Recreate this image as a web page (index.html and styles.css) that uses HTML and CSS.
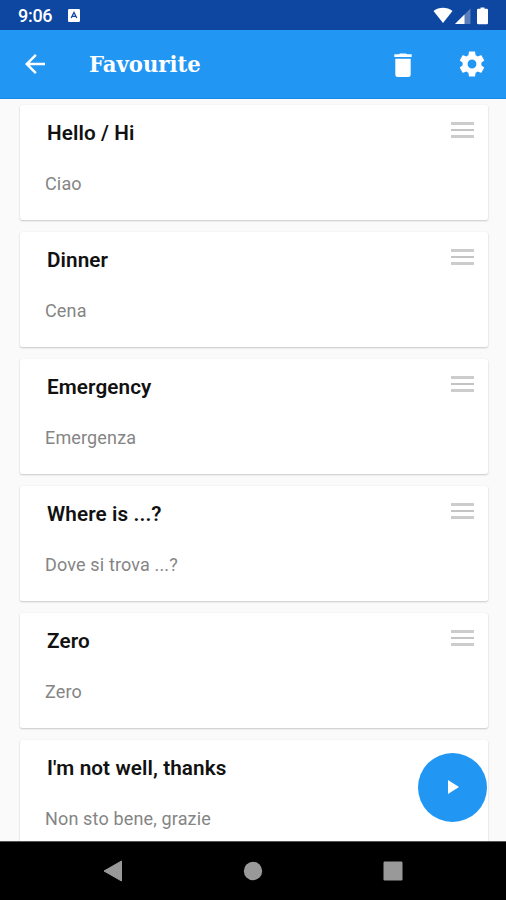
FILE: index.html
```html
<!DOCTYPE html>
<html lang="en">
<head>
<meta charset="utf-8">
<title>Favourite</title>
<link rel="stylesheet" href="styles.css">
</head>
<body>
<div class="screen">
  <div class="status">
    <span class="clock">9:06</span>
    <svg class="app-badge" viewBox="0 0 12 13"><rect width="12" height="13" rx="1.2" fill="#fff"/><path d="M3.2 9 6 3.5 8.8 9M4.4 7.4h3.2" fill="none" stroke="#0d47a1" stroke-width="1.3"/></svg>
    <svg class="signals" viewBox="0 0 58 18"><path d="M0.5 4C6-.2 14-.2 19.500 4L10 16z" fill="#fff"/><path d="M37.500 1.500V17H22z" fill="#5b7fbb"/><path d="M31.500 7.500V17H22z" fill="#fff"/><path d="M47.500 1.800V.5h4v1.300h2.300q1.200 0 1.200 1.200v13q0 1.200-1.200 1.200h-8.600q-1.200 0-1.200-1.200V3q0-1.200 1.200-1.200z" fill="#fff"/></svg>
  </div>
  <header class="appbar">
    <svg class="back" viewBox="4 4 16 16"><path fill="#fff" d="M20 11H7.830l5.590-5.590L12 4l-8 8 8 8 1.410-1.410L7.830 13H20v-2z"/></svg>
    <h1 class="heading"><span class="heading-text">Favourite</span></h1>
    <svg class="trash" viewBox="0 0 18 25"><path fill="#fff" d="M.3 1.300H5L6 .4h6l1 .9h4.700V4H.3zM1.300 5.800h15.400v15.700q0 2.500-2.500 2.500H3.800q-2.500 0-2.500-2.500z"/></svg>
    <svg class="gear" viewBox="2 2 20 20"><path fill="#fff" d="M19.140 12.940c.04-.3.060-.61.060-.94 0-.32-.02-.64-.07-.94l2.030-1.580c.18-.14.230-.41.120-.61l-1.920-3.320c-.12-.22-.37-.29-.59-.22l-2.390.96c-.5-.38-1.030-.7-1.620-.94l-.36-2.540c-.04-.24-.24-.41-.48-.41h-3.840c-.24 0-.43.170-.47.410l-.36 2.540c-.59.240-1.130.570-1.620.940l-2.390-.96c-.22-.08-.47 0-.59.220L2.740 8.870c-.12.210-.08.470.120.610l2.030 1.580c-.05.300-.09.630-.09.940s.02.640.07.940l-2.030 1.580c-.18.140-.23.410-.12.610l1.920 3.320c.12.220.37.290.59.220l2.390-.96c.5.380 1.030.7 1.620.94l.36 2.540c.05.240.24.410.48.410h3.840c.24 0 .44-.17.470-.41l.36-2.540c.59-.24 1.130-.56 1.620-.94l2.390.96c.22.080.47 0 .59-.22l1.920-3.320c.12-.22.070-.47-.12-.61l-2.010-1.580zM12 15.400A3.400 3.400 0 1 1 12 8.600a3.400 3.400 0 0 1 0 6.800z"/></svg>
  </header>
  <main class="list">
    <article class="card"><div class="row"><h2>Hello / Hi</h2><i class="handle"></i></div><p>Ciao</p></article>
    <article class="card"><div class="row"><h2>Dinner</h2><i class="handle"></i></div><p>Cena</p></article>
    <article class="card"><div class="row"><h2>Emergency</h2><i class="handle"></i></div><p>Emergenza</p></article>
    <article class="card"><div class="row"><h2>Where is ...?</h2><i class="handle"></i></div><p>Dove si trova ...?</p></article>
    <article class="card"><div class="row"><h2>Zero</h2><i class="handle"></i></div><p>Zero</p></article>
    <article class="card"><div class="row"><h2>I'm not well, thanks</h2></div><p>Non sto bene, grazie</p></article>
    <div class="fab"><svg viewBox="0 0 11 14"><path d="M0 0v14l11-7z" fill="#fff"/></svg></div>
  </main>
  <nav class="navbar">
    <svg viewBox="0 0 20 22"><path d="M18.500 1v20L1 11z" fill="#999" stroke="#999" stroke-linejoin="round"/></svg>
    <svg viewBox="0 0 20 22"><circle cx="10" cy="11" r="9.200" fill="#999"/></svg>
    <svg viewBox="0 0 20 22"><rect x=".5" y="1.500" width="19" height="19" rx="1.200" fill="#999"/></svg>
  </nav>
</div>
</body>
</html>
```
FILE: styles.css
```css
* { box-sizing: border-box; }
body { margin: 0; font-family: Roboto, "Liberation Sans", sans-serif; background: #fafafa; }
svg { display: block; flex: none; }
.screen { width: 506px; height: 900px; display: flex; flex-direction: column; overflow: hidden; }
.status { height: 30px; flex: none; background: #0d47a1; display: flex; align-items: center; padding: 0 15px 0 18px; }
.clock { width: 50px; color: #fff; font-size: 18px; font-weight: 500; line-height: 30px; padding-top: 2px; letter-spacing: -.3px; }
.app-badge { width: 12px; height: 13px; margin-top: 1px; }
.signals { width: 58px; height: 18px; margin: 1px 0 0 auto; }
.appbar { height: 69px; flex: none; background: #2196f3; border-bottom: 1px solid #168ae6; display: flex; align-items: center; padding: 0 21px 0 25px; }
.back { width: 20px; height: 20px; }
.heading { margin: 0 auto 0 44px; color: #fff; font: bold 23px/30px "DejaVu Serif", "Liberation Serif", serif; width: 112px; white-space: nowrap; }
.heading-text { display: inline-block; transform: scaleX(.92); transform-origin: left; }
.trash { width: 18px; height: 25px; margin: 2px 47px 0 0; }
.gear { width: 26px; height: 26px; }
.list { position: relative; height: 742px; flex: none; overflow: hidden; padding: 6px 18px 0 20px; display: flex; flex-direction: column; gap: 12px; }
.card { height: 115px; flex: none; background: #fff; border-radius: 2px; box-shadow: 0 1px 2px rgba(0, 0, 0, .2), 0 0 1px rgba(0, 0, 0, .08); padding: 14px 14px 0 25px; }
.row { display: flex; justify-content: space-between; padding-left: 2px; height: 26px; }
.card h2 { margin: 0; font-size: 20.7px; font-weight: 600; line-height: 28px; color: #111; letter-spacing: .1px; }
.card p { margin: 26px 0 0; font-size: 18px; line-height: 26px; color: #858585; letter-spacing: .15px; }
.handle { width: 23px; height: 16px; margin-top: 3px; background: linear-gradient(#ccc 0 3px, transparent 3px 7px, #c4c4c4 7px 9px, transparent 9px 13px, #ccc 13px); }
.fab { position: absolute; right: 19px; top: 654px; width: 69px; height: 69px; border-radius: 50%; background: #2196f3; display: flex; align-items: center; justify-content: center; }
.fab svg { width: 11px; height: 14px; margin: -1px 0 0 2px; }
.navbar { flex: 1; background: #000; border-top: 1px solid #555; display: flex; justify-content: space-between; align-items: center; padding: 0 103px 1px; }
.navbar svg { width: 20px; height: 22px; }
```
